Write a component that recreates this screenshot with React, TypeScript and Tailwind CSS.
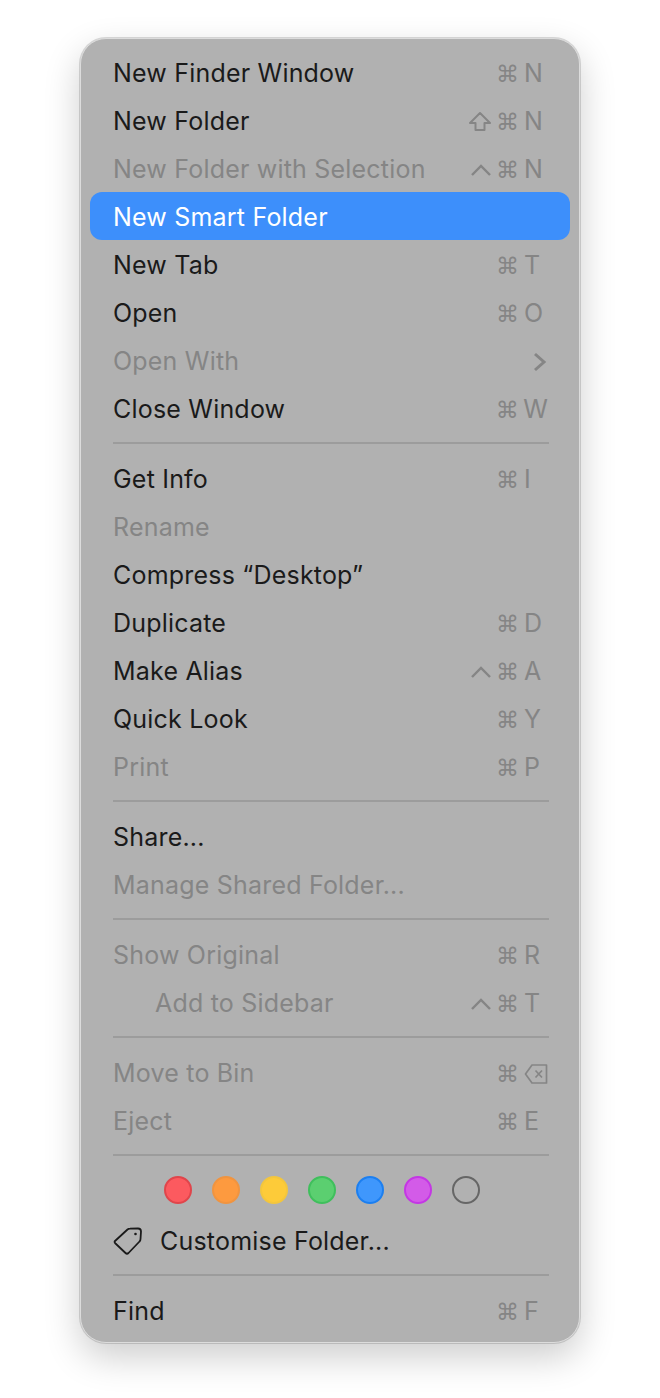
import React from "react";

type Mod = "shift" | "ctrl";
type Item = { label: string; keyName?: string; mod?: Mod; disabled?: boolean; active?: boolean; indent?: boolean; chevron?: boolean; del?: boolean };

function ShiftIcon() {
  return (
    <svg width="24" height="22" viewBox="0 0 24 22" fill="none" stroke="#858585" strokeWidth="2" strokeLinejoin="round">
      <path d="M12 2 L22 12 H16.5 V19 H7.5 V12 H2 Z" />
    </svg>
  );
}

function CtrlIcon() {
  return (
    <svg width="20" height="14" viewBox="0 0 20 14" fill="none" stroke="#858585" strokeWidth="2.4">
      <path d="M1 12 L10 3 L19 12" />
    </svg>
  );
}

function DeleteIcon() {
  return (
    <svg width="24" height="22" viewBox="0 0 24 22" fill="none" stroke="#858585" strokeWidth="1.7" strokeLinejoin="round">
      <path d="M8 2 H22.5 V20 H8 L1.5 11 Z" />
      <path d="M11.5 7.5 L18 14.5 M18 7.5 L11.5 14.5" />
    </svg>
  );
}

function Row({ item }: { item: Item }) {
  const color = item.active ? "text-white" : item.disabled ? "text-[#858585]" : "text-[#1a1a1a]";
  return (
    <div className={`mx-[9px] flex h-12 items-center rounded-[12px] pl-[23px] pr-[22px] pt-[4px] ${item.active ? "bg-[#3d8ffb]" : ""}`}>
      <span className={`flex-1 text-[25px] tracking-[0.2px] ${color} ${item.indent ? "pl-[42px]" : ""}`}>{item.label}</span>
      {item.chevron && (
        <svg width="14" height="20" viewBox="0 0 14 20" fill="none" stroke="#858585" strokeWidth="3" className="mr-[1px]">
          <path d="M2 2 L11 10 L2 18" />
        </svg>
      )}
      {(item.keyName || item.del) && (
        <div className="flex w-[80px] items-center text-[#858585]">
          <span className="flex w-[28px] justify-center">
            {item.mod === "shift" && <span className="mr-[4px] flex"><ShiftIcon /></span>}
            {item.mod === "ctrl" && <span className="mr-[2px] flex"><CtrlIcon /></span>}
          </span>
          <span className="w-[28px] text-[23px] [font-family:'DejaVu_Sans',sans-serif]">⌘</span>
          {item.del ? <DeleteIcon /> : <span className="text-[25px]">{item.keyName}</span>}
        </div>
      )}
    </div>
  );
}

function Separator() {
  return <div className="my-[10px] ml-[32px] mr-[30px] h-[2px] bg-[#9c9c9c]" />;
}

const groups: Item[][] = [
  [
    { label: "New Finder Window", keyName: "N" },
    { label: "New Folder", keyName: "N", mod: "shift" },
    { label: "New Folder with Selection", keyName: "N", mod: "ctrl", disabled: true },
    { label: "New Smart Folder", active: true },
    { label: "New Tab", keyName: "T" },
    { label: "Open", keyName: "O" },
    { label: "Open With", disabled: true, chevron: true },
    { label: "Close Window", keyName: "W" },
  ],
  [
    { label: "Get Info", keyName: "I" },
    { label: "Rename", disabled: true },
    { label: "Compress “Desktop”" },
    { label: "Duplicate", keyName: "D" },
    { label: "Make Alias", keyName: "A", mod: "ctrl" },
    { label: "Quick Look", keyName: "Y" },
    { label: "Print", keyName: "P", disabled: true },
  ],
  [
    { label: "Share..." },
    { label: "Manage Shared Folder...", disabled: true },
  ],
  [
    { label: "Show Original", keyName: "R", disabled: true },
    { label: "Add to Sidebar", keyName: "T", mod: "ctrl", disabled: true, indent: true },
  ],
  [
    { label: "Move to Bin", del: true, disabled: true },
    { label: "Eject", keyName: "E", disabled: true },
  ],
];

const dots = [
  "bg-[#fc5a5f] border-[#e0454b]",
  "bg-[#fd9a3f] border-[#f09440]",
  "bg-[#fdcb39] border-[#f3c63d]",
  "bg-[#5bcf70] border-[#3fbf5c]",
  "bg-[#3f97fc] border-[#1c7ff0]",
  "bg-[#d35be8] border-[#c437e4]",
  "bg-transparent border-[#666666]",
];

export default function App() {
  return (
    <div className="h-[1398px] w-[660px] bg-white pl-[80px] pt-[38px] [font-family:Inter,sans-serif]">
      <div className="h-[1305px] w-[500px] rounded-[26px] border border-[#dcdcdc] bg-[#b1b1b1] pt-[9px] shadow-[0_14px_36px_rgba(0,0,0,0.2),0_0_0_1px_rgba(185,185,185,0.5)]">
        {groups.map((g, i) => (
          <div key={i}>
            {g.map((item) => (
              <Row key={item.label} item={item} />
            ))}
            <Separator />
          </div>
        ))}
        <div className="flex h-[24px] gap-[20px] pl-[83px] pt-[10px]">
          {dots.map((d, i) => (
            <span key={i} className={`h-[28px] w-[28px] shrink-0 rounded-full border-2 ${d}`} />
          ))}
        </div>
        <div className="mt-[28px] flex h-[46px] items-center pl-[32px]">
          <svg width="30" height="30" viewBox="0 0 30 30" fill="none" stroke="#1a1a1a" strokeWidth="1.8" strokeLinejoin="round">
            <path d="M2 15 L14.5 3.5 Q15.5 2.7 17 2.7 L25 2.5 Q28 2.5 28 5.5 L27.5 13 Q27.5 14.5 26.5 15.5 L15.5 27 Q14 28.5 12.5 27 L2.5 17.5 Q1 16 2 15 Z" />
            <circle cx="22.5" cy="8" r="1.3" fill="#1a1a1a" stroke="none" />
          </svg>
          <span className="ml-[17px] pt-[2px] text-[25px] tracking-[0.2px] text-[#1a1a1a]">Customise Folder...</span>
        </div>
        <Separator />
        <Row item={{ label: "Find", keyName: "F" }} />
      </div>
    </div>
  );
}
